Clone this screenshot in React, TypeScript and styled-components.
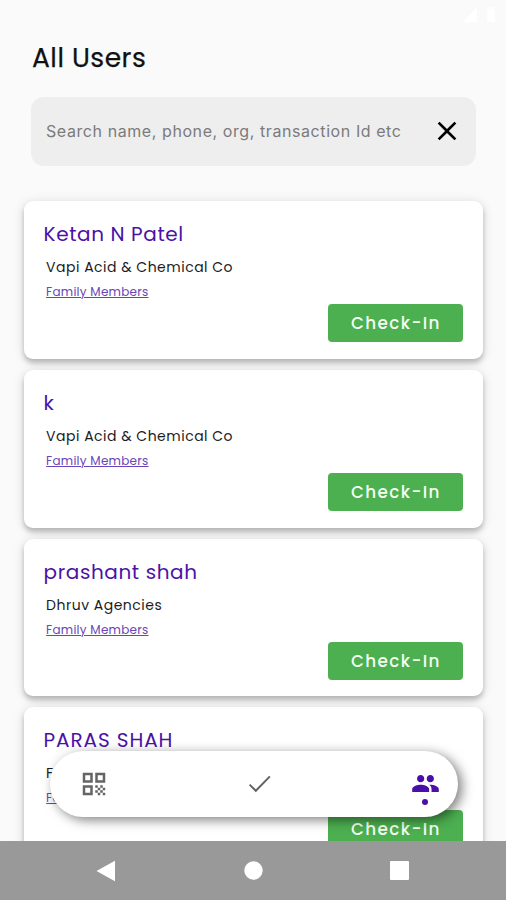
import React from "react";
import styled, { createGlobalStyle } from "styled-components";
import { MdClose, MdOutlineQrCode, MdPeople } from "react-icons/md";

const GlobalStyle = createGlobalStyle`
  * { box-sizing: border-box; }
  body {
    margin: 0;
    background: #fafafa;
    font-family: Poppins, Inter, "Liberation Sans", sans-serif;
  }
`;

const Screen = styled.div`
  position: relative;
  display: flex;
  flex-direction: column;
  width: 506px;
  height: 900px;
  overflow: hidden;
  background: #fafafa;
`;

const StatusBar = styled.div`
  display: flex;
  flex: none;
  align-items: center;
  justify-content: flex-end;
  height: 30px;
  padding-right: 9px;
`;

const Title = styled.h1`
  flex: none;
  height: 56px;
  margin: 0 0 11px 32px;
  color: #111;
  font-size: 26.5px;
  font-weight: 400;
  line-height: 56px;
  letter-spacing: 0.5px;
  -webkit-text-stroke: 0.25px #111;
`;

const SearchBar = styled.div`
  display: flex;
  flex: none;
  align-items: center;
  justify-content: space-between;
  width: 445px;
  height: 69px;
  margin-left: 31px;
  padding: 0 13px 1px 15px;
  border-radius: 13px;
  background: #eee;
  color: #000;
`;

const Placeholder = styled.span`
  color: #7b7b7b;
  font-family: Inter, Roboto, sans-serif;
  font-size: 16px;
  letter-spacing: 0.58px;
  white-space: nowrap;
`;

const List = styled.div`
  display: flex;
  flex: 1;
  flex-direction: column;
  gap: 11px;
  min-height: 0;
  padding: 35.4px 22.6px 0 23.6px;
  overflow: hidden;
`;

const Card = styled.article`
  display: flex;
  flex: none;
  flex-direction: column;
  align-items: flex-start;
  height: 157.7px;
  padding: 18px 20px 0;
  border-radius: 9px;
  background: #fff;
  box-shadow: 0 4px 5px rgba(0, 0, 0, 0.2), 0 2px 12px rgba(0, 0, 0, 0.14);
`;

const Name = styled.h2<{ $spacing: number }>`
  height: 30px;
  margin: 0;
  color: #4a12a6;
  font-size: 20px;
  font-weight: 400;
  line-height: 30px;
  letter-spacing: ${(p) => p.$spacing}px;
`;

const Company = styled.div`
  height: 24px;
  margin: 6px 0 0 2.5px;
  color: #1c1c1c;
  font-size: 14px;
  line-height: 24px;
  letter-spacing: 0.5px;
`;

const FamilyLink = styled.a`
  height: 20px;
  margin: 3px 0 0 2.5px;
  color: #6a45b8;
  font-size: 12px;
  line-height: 20px;
  letter-spacing: 0.26px;
  text-decoration: underline;
  text-decoration-thickness: 1px;
  text-underline-offset: 1px;
`;

const CheckInButton = styled.button`
  align-self: flex-end;
  width: 135px;
  height: 38px;
  margin-top: 2px;
  padding: 0;
  border: 0;
  border-radius: 4px;
  background: #4caf50;
  color: #f4fff2;
  font-family: inherit;
  font-size: 16.8px;
  font-weight: 500;
  line-height: 36px;
  letter-spacing: 1.4px;
`;

const FloatingTabs = styled.nav`
  position: absolute;
  top: 751px;
  left: 50px;
  display: flex;
  align-items: center;
  justify-content: space-between;
  width: 408px;
  height: 66px;
  padding: 0 18px 1px 29px;
  border-radius: 33px;
  background: #fff;
  box-shadow: 4px 3px 12px rgba(0, 0, 0, 0.5);
`;

const Tab = styled.div<{ $active?: boolean }>`
  position: relative;
  display: flex;
  justify-content: center;
  width: 30px;
  color: ${(p) => (p.$active ? "#4a0fa8" : "#646464")};
`;

const ActiveDot = styled.span`
  position: absolute;
  top: 30px;
  left: 12px;
  width: 6px;
  height: 6px;
  border-radius: 50%;
  background: #4a0fa8;
`;

const SystemBar = styled.footer`
  position: relative;
  display: flex;
  flex: none;
  align-items: center;
  justify-content: space-between;
  height: 58.6px;
  padding: 0 97px 0 96px;
  background: #999;
`;

const users = [
  { name: "Ketan N Patel", company: "Vapi Acid & Chemical Co", spacing: 0.6 },
  { name: "k", company: "Vapi Acid & Chemical Co", spacing: 0 },
  { name: "prashant shah", company: "Dhruv Agencies", spacing: 0.6 },
  { name: "PARAS SHAH", company: "Family Co", spacing: 0.9 },
];

export default function App() {
  return (
    <Screen>
      <GlobalStyle />
      <StatusBar>
        <svg width="34" height="16" viewBox="0 0 34 16" fill="#fff">
          <path d="M14 0v15H0zM24 2h2V0h4v2h2v13h-8z" />
        </svg>
      </StatusBar>
      <Title>All Users</Title>
      <SearchBar>
        <Placeholder>Search name, phone, org, transaction Id etc</Placeholder>
        <MdClose size={32} />
      </SearchBar>
      <List>
        {users.map((user) => (
          <Card key={user.name}>
            <Name $spacing={user.spacing}>{user.name}</Name>
            <Company>{user.company}</Company>
            <FamilyLink>Family Members</FamilyLink>
            <CheckInButton>Check-In</CheckInButton>
          </Card>
        ))}
      </List>
      <FloatingTabs>
        <Tab><MdOutlineQrCode size={30} /></Tab>
        <Tab>
          <svg width="30" height="30" viewBox="0 0 30 30" fill="none" stroke="currentColor" strokeWidth="2">
            <path d="m4.6 15.6 6.2 6.2L24.9 7.4" />
          </svg>
        </Tab>
        <Tab $active>
          <MdPeople size={29} />
          <ActiveDot />
        </Tab>
      </FloatingTabs>
      <SystemBar>
        <svg width="20" height="22" viewBox="0 0 20 22" fill="#fff"><path d="M0.5 11 19 0.7v20.6z" /></svg>
        <svg width="19" height="19" viewBox="0 0 19 19" fill="#fff"><circle cx="9.5" cy="9.5" r="9.2" /></svg>
        <svg width="19" height="19" viewBox="0 0 19 19" fill="#fff"><rect width="19" height="19" rx="1" /></svg>
      </SystemBar>
    </Screen>
  );
}
